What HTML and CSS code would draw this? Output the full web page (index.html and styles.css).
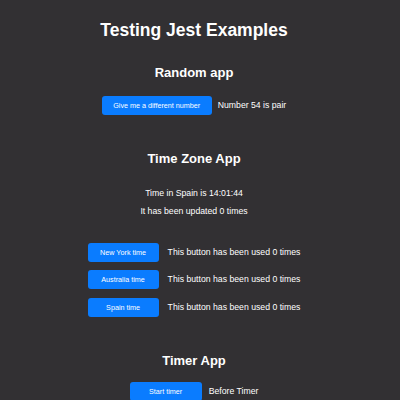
FILE: index.html
```html
<!DOCTYPE html>
<html>
<head>
<meta charset="utf-8">
<link rel="stylesheet" href="styles.css">
</head>
<body>
<main class="page">
  <h1 class="title">Testing Jest Examples</h1>

  <section class="app app-random">
    <h2 class="app-title">Random app</h2>
    <div class="row row-random">
      <button class="btn btn-random">Give me a different number</button>
      <span class="label">Number 54 is pair</span>
    </div>
  </section>

  <section class="app app-zone">
    <h2 class="app-title">Time Zone App</h2>
    <p class="line line-first">Time in Spain is 14:01:44</p>
    <p class="line line-second">It has been updated 0 times</p>
    <div class="zone-list">
      <div class="row row-zone">
        <button class="btn btn-zone">New York time</button>
        <span class="label">This button has been used 0 times</span>
      </div>
      <div class="row row-zone">
        <button class="btn btn-zone">Australia time</button>
        <span class="label">This button has been used 0 times</span>
      </div>
      <div class="row row-zone">
        <button class="btn btn-zone">Spain time</button>
        <span class="label">This button has been used 0 times</span>
      </div>
    </div>
  </section>

  <section class="app app-timer">
    <h2 class="app-title">Timer App</h2>
    <div class="row row-timer">
      <button class="btn btn-timer">Start timer</button>
      <span class="label">Before Timer</span>
    </div>
  </section>
</main>
</body>
</html>
```

FILE: styles.css
```css
html, body {
  margin: 0;
  padding: 0;
  background: #323033;
  height: 100%;
  overflow: hidden;
}

body {
  font-family: "Liberation Sans", Arial, Helvetica, sans-serif;
  color: #ffffff;
}

.page {
  width: 388px;
  padding-top: 20px;
  text-align: center;
}

.title {
  margin: 0;
  font-size: 17.5px;
  line-height: 20px;
  font-weight: bold;
}

.app-title {
  margin: 0;
  font-size: 13px;
  line-height: 16px;
  font-weight: bold;
}

.app-random {
  margin-top: 25px;
}

.app-zone {
  margin-top: 36px;
}

.app-timer {
  margin-top: 36px;
}

.row {
  display: flex;
  justify-content: center;
  align-items: center;
}

.row-random {
  margin-top: 14.5px;
  gap: 6px;
}

.row-timer {
  margin-top: 13.5px;
  gap: 7px;
}

.label {
  font-size: 8.7px;
  line-height: 11px;
  color: #ffffff;
}

.btn {
  height: 19px;
  border: 0;
  border-radius: 3px;
  background: #0a7cff;
  color: #ffffff;
  font-family: "Liberation Sans", Arial, Helvetica, sans-serif;
  font-size: 7.2px;
  line-height: 19px;
  padding: 0;
  text-align: center;
}

.btn-random {
  width: 110px;
}

.btn-zone {
  width: 71px;
}

.btn-timer {
  width: 72px;
}

.line {
  margin: 0;
  font-size: 8.7px;
  line-height: 11px;
}

.line-first {
  margin-top: 21px;
}

.line-second {
  margin-top: 7.3px;
}

.zone-list {
  margin-top: 26px;
  display: flex;
  flex-direction: column;
  gap: 8.5px;
}

.row-zone {
  gap: 9px;
}
```
